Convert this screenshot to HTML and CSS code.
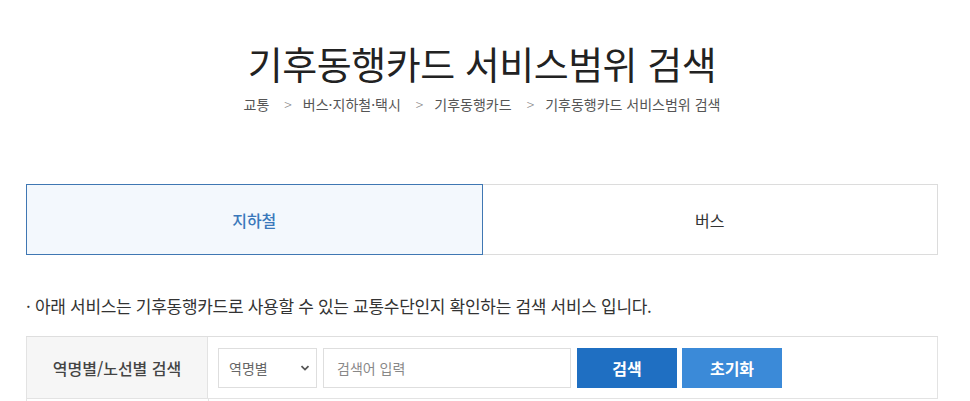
FILE: index.html
```html
<!DOCTYPE html>
<html lang="ko">
<head>
<meta charset="utf-8">
<title>기후동행카드 서비스범위 검색</title>
<link rel="stylesheet" href="styles.css">
</head>
<body>
<div class="page">
  <header class="head">
    <h1 class="title">기후동행카드 서비스범위 검색</h1>
    <nav class="crumbs">
      <span>교통</span><span class="sep">&gt;</span>
      <span>버스·지하철·택시</span><span class="sep">&gt;</span>
      <span>기후동행카드</span><span class="sep">&gt;</span>
      <span>기후동행카드 서비스범위 검색</span>
    </nav>
  </header>

  <div class="tabs">
    <div class="tab active">지하철</div>
    <div class="tab">버스</div>
  </div>

  <p class="notice">· 아래 서비스는 기후동행카드로 사용할 수 있는 교통수단인지 확인하는 검색 서비스 입니다.</p>

  <div class="search">
    <div class="search-label">역명별/노선별 검색</div>
    <div class="search-body">
      <div class="select">
        <span>역명별</span>
        <svg class="chev" width="10" height="8" viewBox="0 0 10 8"><path d="M1.5 2.2 L5 5.6 L8.5 2.2" fill="none" stroke="#555" stroke-width="1.8"/></svg>
      </div>
      <div class="input">검색어 입력</div>
      <button class="btn btn-search">검색</button>
      <button class="btn btn-reset">초기화</button>
    </div>
  </div>
  <div class="search-next"></div>
</div>
</body>
</html>
```

FILE: styles.css
```css
* { box-sizing: border-box; }
html, body { margin: 0; padding: 0; background: #fff; }
body {
  font-family: "Noto Sans CJK KR", "Noto Sans", sans-serif;
  color: #333;
}
.page {
  width: 912px;
  margin-left: 26px;
}
.head {
  text-align: center;
  padding-top: 36px;
}
.title {
  margin: 0;
  font-size: 38px;
  font-weight: 400;
  line-height: 54px;
  color: #222;
  letter-spacing: -0.5px;
}
.crumbs {
  margin-top: 4px;
  font-size: 14px;
  line-height: 20px;
  color: #555;
  display: flex;
  justify-content: center;
}
.crumbs .sep {
  padding: 0 11px 0 15px;
  color: #888;
  font-weight: 300;
}
.tabs {
  margin-top: 70px;
  display: flex;
  height: 71px;
}
.tab {
  flex: 1;
  display: flex;
  align-items: center;
  justify-content: center;
  border: 1px solid #dcdcdc;
  border-left: none;
  font-size: 16px;
  color: #333;
}
.tab.active {
  border: 1px solid #3f77b3;
  background: #f3f8fd;
  color: #3a78bb;
  font-weight: 500;
}
.notice {
  margin: 39px 0 0;
  font-size: 17px;
  line-height: 24px;
  color: #333;
  letter-spacing: -0.3px;
}
.search {
  margin-top: 18px;
  display: flex;
  border-top: 1px solid #dedede;
  border-bottom: 1px solid #e3e3e3;
  height: 63px;
}
.search-label {
  width: 182px;
  background: #f6f6f6;
  border-left: 1px solid #e3e3e3;
  border-right: 1px solid #e3e3e3;
  display: flex;
  align-items: center;
  justify-content: center;
  font-size: 16px;
  font-weight: 500;
  color: #444;
}
.search-body {
  flex: 1;
  display: flex;
  align-items: center;
  gap: 6px;
  padding-left: 10px;
  border-right: 1px solid #e3e3e3;
}
.select {
  width: 99px;
  height: 40px;
  border: 1px solid #dedede;
  display: flex;
  align-items: center;
  justify-content: space-between;
  padding: 0 6px 0 10px;
  font-size: 14px;
  color: #666;
}
.input {
  width: 248px;
  height: 40px;
  border: 1px solid #dedede;
  display: flex;
  align-items: center;
  padding-left: 13px;
  font-size: 14px;
  color: #888;
}
.btn {
  width: 100px;
  height: 40px;
  border: none;
  color: #fff;
  font-family: inherit;
  font-size: 16px;
  font-weight: 700;
  padding: 0;
}
.btn-search { background: #1f6fc2; }
.btn-reset { background: #3b8ad8; margin-left: -1px; }
.search-next {
  height: 10px;
  border-left: 1px solid #e3e3e3;
  width: 183px;
  border-right: 1px solid #e3e3e3;
}
```
